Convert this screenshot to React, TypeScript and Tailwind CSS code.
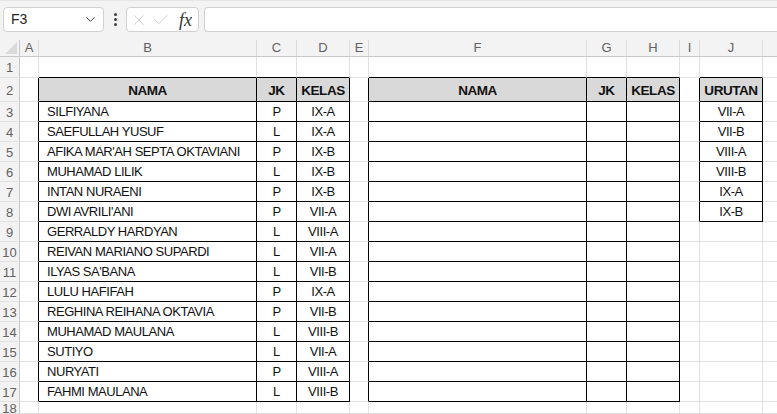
import React from 'react';
import { ChevronDown, X, Check } from 'lucide-react';

const cols = ['A', 'B', 'C', 'D', 'E', 'F', 'G', 'H', 'I', 'J', 'K'];
const widths = ['w-[19px]', 'w-[218px]', 'w-[40px]', 'w-[53px]', 'w-[19px]', 'w-[218px]', 'w-[40px]', 'w-[53px]', 'w-[20px]', 'w-[63px]', 'w-[64px]'];
const heights: Record<number, string> = { 1: 'h-[21px]', 2: 'h-[24px]', 18: 'h-[12px]' };

const students = [
  ['SILFIYANA', 'P', 'IX-A'],
  ['SAEFULLAH YUSUF', 'L', 'IX-A'],
  ["AFIKA MAR'AH SEPTA OKTAVIANI", 'P', 'IX-B'],
  ['MUHAMAD LILIK', 'L', 'IX-B'],
  ['INTAN NURAENI', 'P', 'IX-B'],
  ["DWI AVRILI'ANI", 'P', 'VII-A'],
  ['GERRALDY HARDYAN', 'L', 'VIII-A'],
  ['REIVAN MARIANO SUPARDI', 'L', 'VII-A'],
  ["ILYAS SA'BANA", 'L', 'VII-B'],
  ['LULU HAFIFAH', 'P', 'IX-A'],
  ['REGHINA REIHANA OKTAVIA', 'P', 'VII-B'],
  ['MUHAMAD MAULANA', 'L', 'VIII-B'],
  ['SUTIYO', 'L', 'VII-A'],
  ['NURYATI', 'P', 'VIII-A'],
  ['FAHMI MAULANA', 'L', 'VIII-B'],
];
const urutan = ['VII-A', 'VII-B', 'VIII-A', 'VIII-B', 'IX-A', 'IX-B'];

// bordered ranges on the sheet: column indexes and row numbers
const tables = [
  { c0: 1, c1: 3, r0: 2, r1: 17 },
  { c0: 5, c1: 7, r0: 2, r1: 17 },
  { c0: 9, c1: 9, r0: 2, r1: 8 },
];

const inTable = (r: number, c: number) =>
  tables.find((t) => r >= t.r0 && r <= t.r1 && c >= t.c0 && c <= t.c1);

const cellValue = (r: number, c: number): string => {
  if (r === 2) {
    if (c === 1 || c === 5) return 'NAMA';
    if (c === 2 || c === 6) return 'JK';
    if (c === 3 || c === 7) return 'KELAS';
    if (c === 9) return 'URUTAN';
  }
  if (r >= 3 && r <= 17) {
    const s = students[r - 3];
    if (c === 1) return s[0];
    if (c === 2) return s[1];
    if (c === 3) return s[2];
  }
  if (c === 9 && r >= 3 && r <= 8) return urutan[r - 3];
  return '';
};

const Cell: React.FC<{ r: number; c: number }> = ({ r, c }) => {
  const right = !!inTable(r, c) || !!inTable(r, c + 1);
  const bottom = !!inTable(r, c) || !!inTable(r + 1, c);
  const header = r === 2 && !!inTable(r, c);
  const value = cellValue(r, c);
  const left = c === 1 && r >= 3;
  return (
    <div
      className={`${widths[c]} shrink-0 border-r border-b flex items-center overflow-hidden whitespace-nowrap ${
        right ? 'border-r-black' : 'border-r-[#e1e1e1]'
      } ${bottom ? 'border-b-black' : 'border-b-[#e1e1e1]'} ${
        header ? 'bg-[#d9d9d9] font-bold text-[13.5px] pt-[4px]' : 'bg-white pt-[1px]'
      } ${left ? 'justify-start pl-[8px]' : 'justify-center'}`}
    >
      {value}
    </div>
  );
};

const App: React.FC = () => {
  const rows = Array.from({ length: 18 }, (_, i) => i + 1);
  return (
    <div className="w-[777px] h-[414px] overflow-hidden bg-[#f3f3f3] font-['Liberation_Sans',sans-serif]">
      {/* formula bar */}
      <div className="h-[40px] flex items-start pt-[6px] pl-[3px] gap-[5px] border-t border-[#e6e6e6]">
        <div className="w-[101px] h-[25px] bg-white border border-[#d1d1d1] rounded-[4px] flex items-center justify-between pl-[7px] pr-[5px]">
          <span className="text-[14px] text-[#242424]">F3</span>
          <ChevronDown className="w-[15px] h-[15px] text-[#424242]" strokeWidth={1.6} />
        </div>
        <div className="w-[12px] h-[25px] flex flex-col items-center justify-center gap-[2px]">
          <span className="w-[3px] h-[3px] rounded-full bg-[#424242]" />
          <span className="w-[3px] h-[3px] rounded-full bg-[#424242]" />
          <span className="w-[3px] h-[3px] rounded-full bg-[#424242]" />
        </div>
        <div className="w-[73px] h-[25px] bg-white border border-[#d1d1d1] rounded-[4px] flex items-center pl-[3px] gap-[4px]">
          <X className="w-[18px] h-[18px] text-[#c4c4c4]" strokeWidth={1.1} />
          <Check className="w-[18px] h-[18px] text-[#c4c4c4]" strokeWidth={1.1} />
          <span className="text-[18px] italic text-[#333] font-['Liberation_Serif',serif] leading-none ml-[5px]">fx</span>
        </div>
        <div className="flex-1 h-[25px] bg-white border border-[#d1d1d1] rounded-l-[4px] border-r-0" />
      </div>

      {/* column headers */}
      <div className="flex h-[17px] border-b border-[#c8c8c8] overflow-hidden">
        <div className="w-[20px] shrink-0 border-r border-[#c8c8c8] relative overflow-hidden">
          <div className="absolute right-[2px] bottom-[2px] w-0 h-0 border-l-[12px] border-l-transparent border-b-[12px] border-b-[#dadada]" />
        </div>
        {cols.map((c, i) => (
          <div
            key={c}
            className={`${widths[i]} shrink-0 border-r border-[#dcdcdc] flex items-center justify-center text-[13px] text-[#616161]`}
          >
            {c}
          </div>
        ))}
      </div>

      {/* grid */}
      <div className="text-[13px] tracking-[-0.45px] text-[#111]">
        {rows.map((r) => (
          <div key={r} className={`flex overflow-hidden ${heights[r] ?? 'h-[20px]'}`}>
            <div className="w-[20px] shrink-0 border-r border-b border-r-[#c8c8c8] border-b-[#e1e1e1] flex items-center justify-center pt-[2px] text-[13px] tracking-normal text-[#616161]">
              {r}
            </div>
            {cols.map((_, c) => (
              <Cell key={c} r={r} c={c} />
            ))}
          </div>
        ))}
      </div>
    </div>
  );
};

export default App;
